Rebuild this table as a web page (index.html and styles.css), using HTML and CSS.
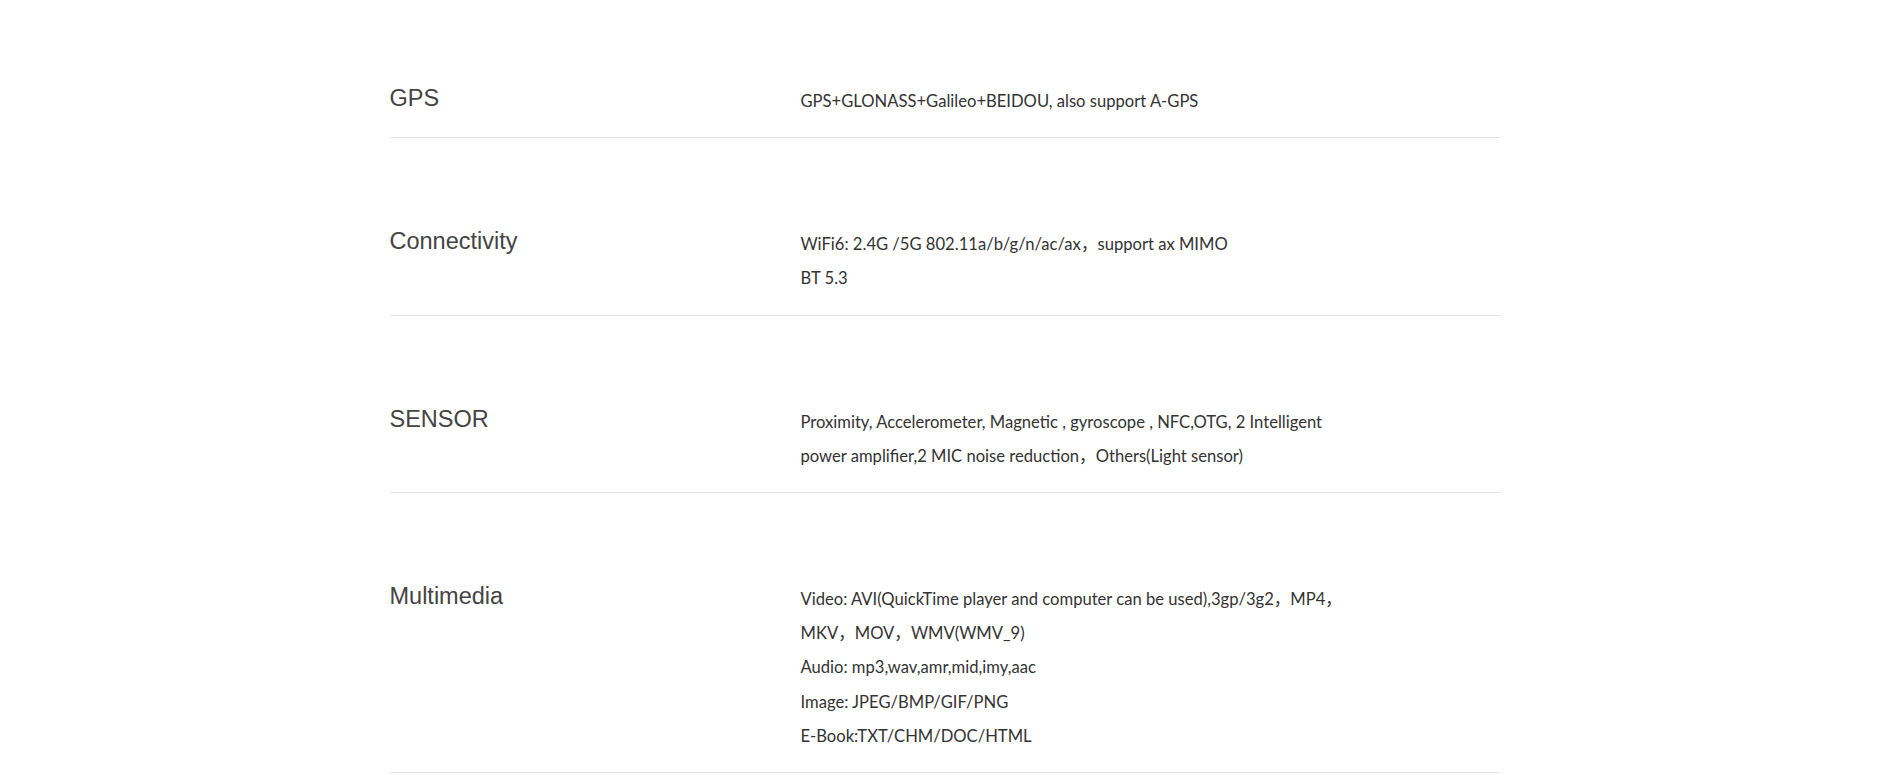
FILE: index.html
```html
<!DOCTYPE html>
<html lang="en">
<head>
    <meta charset="UTF-8">
    <meta name="viewport" content="width=device-width, initial-scale=1.0">
    <title>Specifications</title>
    <link rel="stylesheet" href="styles.css">
</head>
<body>
    <main class="specs">
        <div class="spec-row">
            <div class="spec-name">GPS</div>
            <div class="spec-value">
                <p>GPS+GLONASS+Galileo+BEIDOU, also support A-GPS</p>
            </div>
        </div>
        <div class="spec-row">
            <div class="spec-name">Connectivity</div>
            <div class="spec-value">
                <p>WiFi6: 2.4G /5G 802.11a/b/g/n/ac/ax，support ax MIMO</p>
                <p>BT 5.3</p>
            </div>
        </div>
        <div class="spec-row">
            <div class="spec-name">SENSOR</div>
            <div class="spec-value">
                <p>Proximity, Accelerometer, Magnetic , gyroscope , NFC,OTG, 2 Intelligent<br>power amplifier,2 MIC noise reduction，Others(Light sensor)</p>
            </div>
        </div>
        <div class="spec-row">
            <div class="spec-name">Multimedia</div>
            <div class="spec-value">
                <p>Video: AVI(QuickTime player and computer can be used),3gp/3g2，MP4，<br>MKV，MOV，WMV(WMV_9)</p>
                <p>Audio: mp3,wav,amr,mid,imy,aac</p>
                <p>Image: JPEG/BMP/GIF/PNG</p>
                <p>E-Book:TXT/CHM/DOC/HTML</p>
            </div>
        </div>
    </main>
</body>
</html>
```

FILE: styles.css
```css
body {
    margin: 0;
    padding: 0;
    background-color: #fff;
    color: #333;
    font-family: "Liberation Sans", Arial, sans-serif;
}
.specs {
    width: 1110px;
    margin: 0 auto;
    padding-left: 1px;
}
.spec-row {
    display: grid;
    grid-template-columns: 411px 1fr;
    padding: 89px 0 19px;
    border-bottom: 1px solid #e5e5e5;
}
.spec-row:first-child {
    padding-top: 84px;
}
.spec-name {
    font-size: 23.5px;
    line-height: 28px;
    color: #444;
}
.spec-value {
    font-family: Lato, "Noto Sans CJK SC", sans-serif;
    font-size: 16.6px;
    line-height: 34.2px;
    color: #333;
}
.spec-value p {
    margin: 0;
}
```
